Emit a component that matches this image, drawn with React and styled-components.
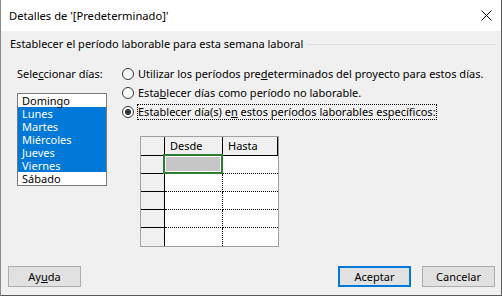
import React from 'react';
import styled, { createGlobalStyle } from 'styled-components';

const GlobalStyle = createGlobalStyle`
  html, body {
    margin: 0;
    padding: 0;
    background: #f0f0f0;
  }
  body {
    font-family: "Noto Sans", "Liberation Sans", sans-serif;
    font-size: 11px;
    color: #000;
  }
`;

const Window = styled.div`
  width: 502px;
  height: 296px;
  box-sizing: border-box;
  border-left: 1px solid #8a8a8a;
  border-right: 1px solid #5a5a5a;
  border-bottom: 1px solid #5a5a5a;
  background: #f0f0f0;
  display: flex;
  flex-direction: column;
`;

const TitleBar = styled.div`
  height: 31px;
  flex: none;
  background: #fff;
  display: flex;
  align-items: center;
  justify-content: space-between;
  padding: 0 9px 0 8px;
`;

const Title = styled.span`
  line-height: 16px;
  font-size: 11.2px;
`;

const Body = styled.div`
  flex: 1;
  display: flex;
  flex-direction: column;
`;

const GroupHeader = styled.div`
  display: flex;
  align-items: center;
  margin: 5px 5px 0 9px;
  line-height: 16px;
  white-space: nowrap;
`;

const GroupLine = styled.div`
  flex: 1;
  height: 0;
  border-top: 1px solid #dcdcdc;
  margin-left: 4px;
`;

const Content = styled.div`
  display: flex;
  margin-top: 12px;
`;

const LeftCol = styled.div`
  width: 105px;
  margin-left: 16px;
  flex: none;
`;

const Label = styled.div`
  line-height: 16px;
  margin-top: 2px;
`;

const ListBox = styled.ul`
  list-style: none;
  margin: 11px 0 0;
  padding: 0;
  width: 90px;
  box-sizing: border-box;
  border: 1px solid #7a7a7a;
  background: #fff;
`;

const ListItem = styled.li`
  height: 13px;
  line-height: 13px;
  padding-left: 4px;
  background: ${p => (p.$selected ? '#0078d7' : '#fff')};
  color: ${p => (p.$selected ? '#fff' : '#000')};
`;

const RightCol = styled.div`
  display: flex;
  flex-direction: column;
`;

const RadioRow = styled.label`
  display: flex;
  align-items: center;
  height: 19px;
  white-space: nowrap;
`;

const RadioDot = styled.span`
  width: 12px;
  height: 12px;
  box-sizing: border-box;
  border-radius: 50%;
  border: 1px solid #333;
  background: #fff;
  margin-right: 4px;
  display: flex;
  align-items: center;
  justify-content: center;
  flex: none;
  &::after {
    content: '';
    width: 6px;
    height: 6px;
    border-radius: 50%;
    background: ${p => (p.$checked ? '#333' : 'transparent')};
  }
`;

const RadioText = styled.span`
  line-height: 14px;
  border: 1px dotted ${p => (p.$focused ? '#000' : 'transparent')};
  margin-left: -1px;
`;

const Grid = styled.div`
  margin: 15px 0 0 18px;
  display: grid;
  grid-template-columns: 24px 58px 55px;
  grid-template-rows: 19px repeat(5, 18px);
  border: 1px solid #a0a0a0;
  width: fit-content;
`;

const Cell = styled.div`
  box-sizing: border-box;
  position: relative;
  background: ${p => (p.$head ? '#f0f0f0' : '#fff')};
  border-right: ${p => p.$right || 'none'};
  border-bottom: ${p => p.$bottom || 'none'};
  padding-left: 5px;
  line-height: 18px;
`;

const ActiveCell = styled.div`
  position: absolute;
  left: -2px;
  top: -2px;
  right: -1px;
  bottom: -1px;
  border: 2px solid #2e7d32;
  padding: 1px;
  background: #fff;
  &::after {
    content: '';
    display: block;
    height: 100%;
    background: #c6c6c6;
  }
`;

const Footer = styled.div`
  margin-top: auto;
  display: flex;
  padding: 0 6px 8px 7px;
`;

const Button = styled.button`
  width: 73px;
  height: 21px;
  box-sizing: border-box;
  border: ${p => (p.$default ? '2px solid #0078d7' : '1px solid #adadad')};
  background: #e1e1e1;
  font-family: inherit;
  font-size: 11px;
  color: #000;
  padding: 0;
  margin-left: ${p => p.$gap || '0'};
`;

const Spacer = styled.div`
  flex: 1;
`;

const days = ['Domingo', 'Lunes', 'Martes', 'Miércoles', 'Jueves', 'Viernes', 'Sábado'];

const solid = '1px solid #000';
const dotted = '1px dotted #000';

export default function App() {
  const rows = [0, 1, 2, 3, 4];
  return (
    <>
      <GlobalStyle />
      <Window>
        <TitleBar>
          <Title>Detalles de '[Predeterminado]'</Title>
          <svg width="11" height="11" viewBox="0 0 11 11">
            <path d="M0.5 0.5 L10.5 10.5 M10.5 0.5 L0.5 10.5" stroke="#000" strokeWidth="1" />
          </svg>
        </TitleBar>
        <Body>
          <GroupHeader>
            Establecer el período laborable para esta semana laboral
            <GroupLine />
          </GroupHeader>
          <Content>
            <LeftCol>
              <Label>Sele<u>c</u>cionar días:</Label>
              <ListBox>
                {days.map((d, i) => (
                  <ListItem key={d} $selected={i > 0 && i < 6}>{d}</ListItem>
                ))}
              </ListBox>
            </LeftCol>
            <RightCol>
              <RadioRow>
                <RadioDot />
                <RadioText>Utilizar los períodos pre<u>d</u>eterminados del proyecto para estos días.</RadioText>
              </RadioRow>
              <RadioRow>
                <RadioDot />
                <RadioText>Esta<u>b</u>lecer días como período no laborable.</RadioText>
              </RadioRow>
              <RadioRow>
                <RadioDot $checked />
                <RadioText $focused>Establecer día(s) e<u>n</u> estos períodos laborables específicos:</RadioText>
              </RadioRow>
              <Grid>
                <Cell $head $right={solid} $bottom={solid} />
                <Cell $head $right={solid} $bottom={solid}>Desde</Cell>
                <Cell $head $right={solid} $bottom={solid}>Hasta</Cell>
                {rows.map(r => (
                  <React.Fragment key={r}>
                    <Cell $head $right={solid} $bottom={r < 4 ? solid : 'none'} />
                    <Cell $right={dotted} $bottom={r < 4 ? dotted : 'none'}>
                      {r === 0 && <ActiveCell />}
                    </Cell>
                    <Cell $bottom={r < 4 ? dotted : 'none'} />
                  </React.Fragment>
                ))}
              </Grid>
            </RightCol>
          </Content>
          <Footer>
            <Button>Ay<u>u</u>da</Button>
            <Spacer />
            <Button $default>Aceptar</Button>
            <Button $gap="11px">Cancelar</Button>
          </Footer>
        </Body>
      </Window>
    </>
  );
}
